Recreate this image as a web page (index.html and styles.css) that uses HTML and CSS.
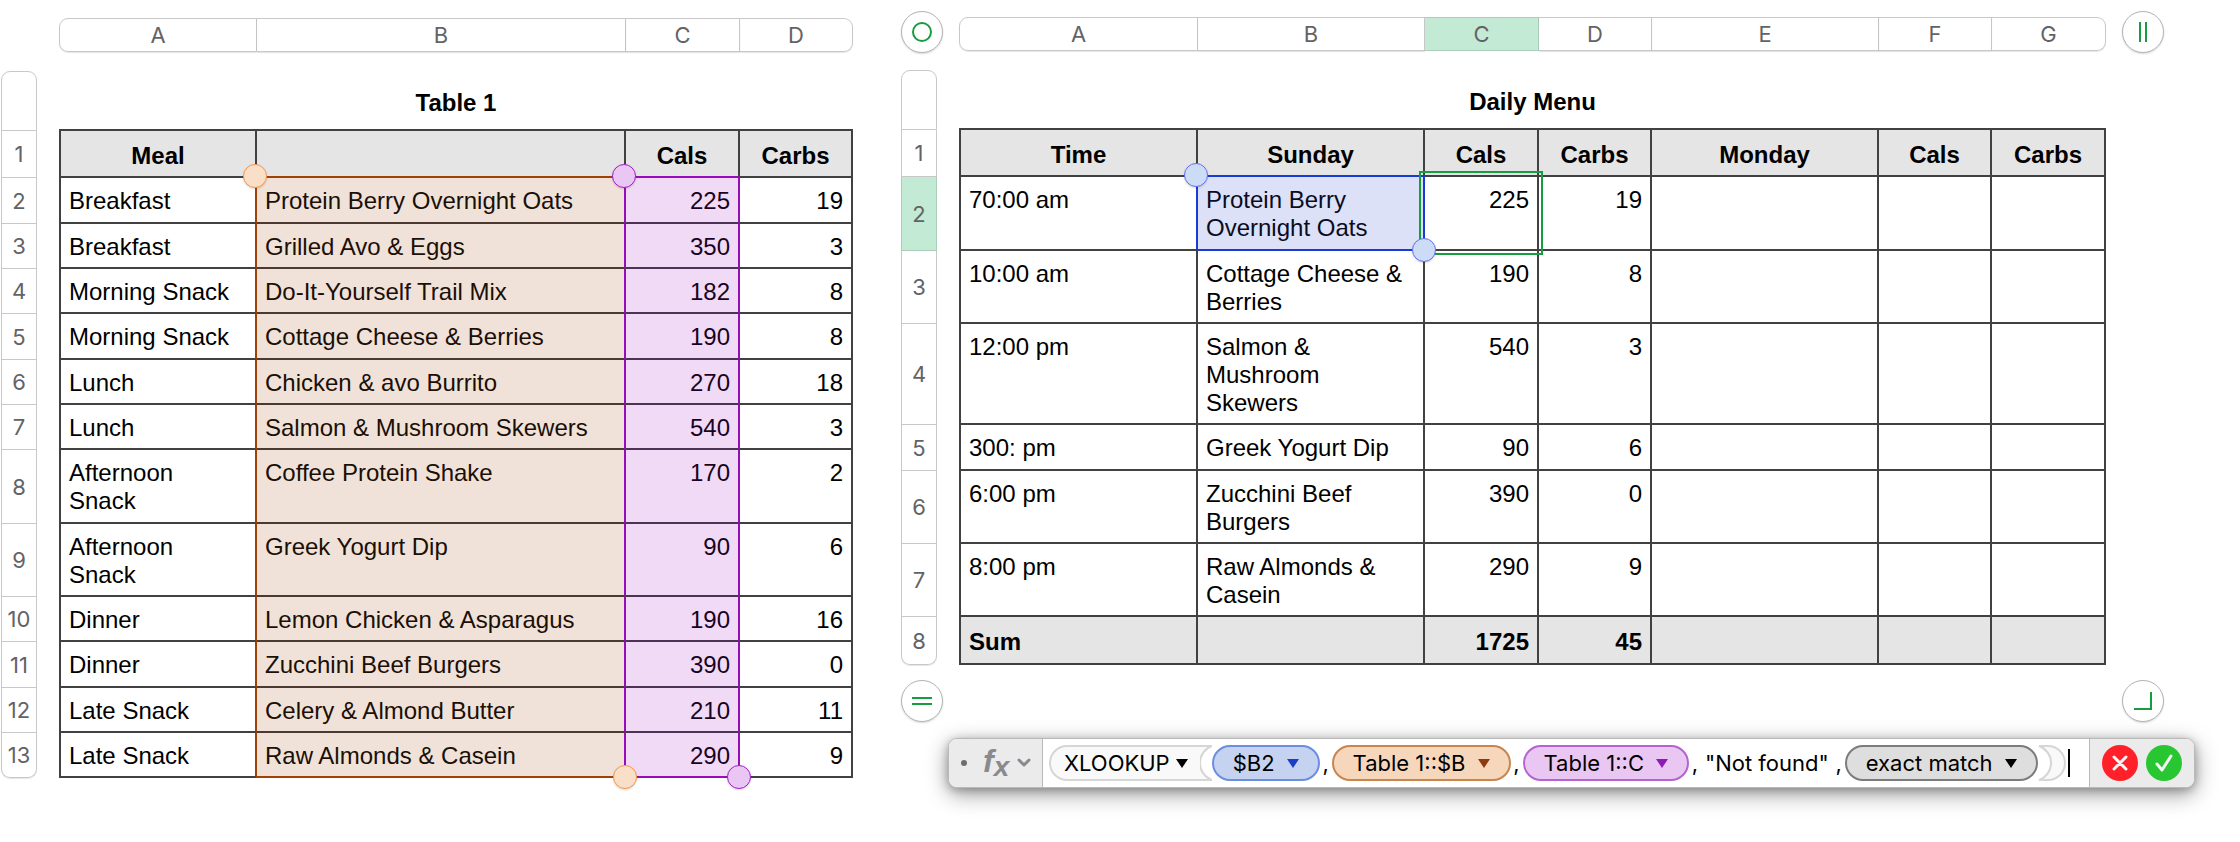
FILE: index.html
```
<!DOCTYPE html>
<html lang="en">

<head>
    <meta charset="UTF-8">
    <meta name="viewport" content="width=device-width, initial-scale=1.0">
    <title>Daily Menu</title>
    <link rel="stylesheet" href="styles.css">
</head>

<body>
    <main class="canvas">
        <section class="source-pane">
            <table class="sheet source">
                <colgroup>
                    <col class="w-rail"><col class="w-gap"><col class="w-meal"><col><col class="w-num"><col class="w-num-last">
                </colgroup>
                <thead>
                    <tr class="letters"><td colspan="2"></td><th>A</th><th>B</th><th>C</th><th>D</th></tr>
                    <tr class="spacer"><td colspan="6"></td></tr>
                    <tr class="title"><th class="rail"></th><td></td><th colspan="4">Table 1</th></tr>
                    <tr class="heading"><th class="rail">1</th><td class="gap"></td><th>Meal</th><th></th><th>Cals</th><th>Carbs</th></tr>
                </thead>
                <tbody>
                    <tr><th class="rail">2</th><td class="gap"></td><td>Breakfast</td><td>Protein Berry Overnight Oats<span class="grip start orange"></span></td><td class="num">225<span class="grip start purple"></span></td><td class="num">19</td></tr>
                    <tr><th class="rail">3</th><td class="gap"></td><td>Breakfast</td><td>Grilled Avo &amp; Eggs</td><td class="num">350</td><td class="num">3</td></tr>
                    <tr><th class="rail">4</th><td class="gap"></td><td>Morning Snack</td><td>Do-It-Yourself Trail Mix</td><td class="num">182</td><td class="num">8</td></tr>
                    <tr><th class="rail">5</th><td class="gap"></td><td>Morning Snack</td><td>Cottage Cheese &amp; Berries</td><td class="num">190</td><td class="num">8</td></tr>
                    <tr><th class="rail">6</th><td class="gap"></td><td>Lunch</td><td>Chicken &amp; avo Burrito</td><td class="num">270</td><td class="num">18</td></tr>
                    <tr><th class="rail">7</th><td class="gap"></td><td>Lunch</td><td>Salmon &amp; Mushroom Skewers</td><td class="num">540</td><td class="num">3</td></tr>
                    <tr><th class="rail">8</th><td class="gap"></td><td>Afternoon<br>Snack</td><td>Coffee Protein Shake</td><td class="num">170</td><td class="num">2</td></tr>
                    <tr><th class="rail">9</th><td class="gap"></td><td>Afternoon<br>Snack</td><td>Greek Yogurt Dip</td><td class="num">90</td><td class="num">6</td></tr>
                    <tr><th class="rail">10</th><td class="gap"></td><td>Dinner</td><td>Lemon Chicken &amp; Asparagus</td><td class="num">190</td><td class="num">16</td></tr>
                    <tr><th class="rail">11</th><td class="gap"></td><td>Dinner</td><td>Zucchini Beef Burgers</td><td class="num">390</td><td class="num">0</td></tr>
                    <tr><th class="rail">12</th><td class="gap"></td><td>Late Snack</td><td>Celery &amp; Almond Butter</td><td class="num">210</td><td class="num">11</td></tr>
                    <tr><th class="rail last">13</th><td class="gap"></td><td>Late Snack</td><td>Raw Almonds &amp; Casein<span class="grip end orange"></span></td><td class="num">290<span class="grip end purple"></span></td><td class="num">9</td></tr>
                </tbody>
            </table>
        </section>

        <section class="menu-pane">
            <div class="menu-row">
                <div class="menu-main">
                    <table class="sheet menu">
                        <colgroup>
                            <col class="w-rail"><col class="w-gap"><col><col class="w-day"><col class="w-num"><col class="w-num-last"><col class="w-day"><col class="w-num-last"><col class="w-num">
                        </colgroup>
                        <thead>
                            <tr class="letters">
                                <td colspan="2">
                                    <button class="handle corner" aria-label="Select table">
                                        <svg width="20" height="20" viewBox="0 0 20 20"><circle cx="10" cy="10" r="9"/></svg>
                                    </button>
                                </td>
                                <th>A</th><th>B</th><th class="current">C</th><th>D</th><th>E</th><th>F</th><th>G</th>
                            </tr>
                            <tr class="spacer"><td colspan="9"></td></tr>
                            <tr class="title"><th class="rail"></th><td></td><th colspan="7">Daily Menu</th></tr>
                            <tr class="heading"><th class="rail">1</th><td class="gap"></td><th>Time</th><th>Sunday</th><th>Cals</th><th>Carbs</th><th>Monday</th><th>Cals</th><th>Carbs</th></tr>
                        </thead>
                        <tbody>
                            <tr><th class="rail current">2</th><td class="gap"></td><td class="before-ref">70:00 am</td><td class="ref">Protein Berry Overnight Oats<span class="grip start blue"></span><span class="grip end blue"></span></td><td class="num active">225</td><td class="num">19</td><td></td><td></td><td></td></tr>
                            <tr><th class="rail">3</th><td class="gap"></td><td>10:00 am</td><td>Cottage Cheese &amp; Berries</td><td class="num">190</td><td class="num">8</td><td></td><td></td><td></td></tr>
                            <tr><th class="rail">4</th><td class="gap"></td><td>12:00 pm</td><td>Salmon &amp; Mushroom Skewers</td><td class="num">540</td><td class="num">3</td><td></td><td></td><td></td></tr>
                            <tr><th class="rail">5</th><td class="gap"></td><td>300: pm</td><td>Greek Yogurt Dip</td><td class="num">90</td><td class="num">6</td><td></td><td></td><td></td></tr>
                            <tr><th class="rail">6</th><td class="gap"></td><td>6:00 pm</td><td>Zucchini Beef Burgers</td><td class="num">390</td><td class="num">0</td><td></td><td></td><td></td></tr>
                            <tr><th class="rail">7</th><td class="gap"></td><td>8:00 pm</td><td>Raw Almonds &amp; Casein</td><td class="num">290</td><td class="num">9</td><td></td><td></td><td></td></tr>
                        </tbody>
                        <tfoot>
                            <tr><th class="rail last">8</th><td class="gap"></td><td>Sum</td><td></td><td class="num">1725</td><td class="num">45</td><td></td><td></td><td></td></tr>
                        </tfoot>
                    </table>
                    <button class="handle add-row" aria-label="Add rows">
                        <svg width="20" height="20" viewBox="0 0 20 20"><path d="M0 7H20M0 13H20"/></svg>
                    </button>
                </div>
                <div class="side-handles">
                    <button class="handle" aria-label="Add columns">
                        <svg width="20" height="20" viewBox="0 0 20 20"><path d="M7 0V20M13 0V20"/></svg>
                    </button>
                    <button class="handle" aria-label="Resize table">
                        <svg width="20" height="20" viewBox="0 0 20 20"><path d="M1 18H18V1"/></svg>
                    </button>
                </div>
            </div>

            <div class="formula-bar">
                <button class="fx" aria-label="Formula options">
                    <span class="dot"></span>
                    <span class="fx-label">f<sub>x</sub></span>
                    <svg width="14" height="10" viewBox="0 0 14 10"><path d="M2 2L7 7L12 2"/></svg>
                </button>
                <div class="formula">
                    <button class="token func">XLOOKUP<svg class="arrow" width="12" height="9" viewBox="0 0 12 9"><path d="M0 0H12L6 9Z"/></svg></button>
                    <svg class="paren-open" width="12" height="36" viewBox="0 0 12 36">
                        <path class="paren-fill" d="M0 1H12A18 18 0 0 0 12 35H0Z"/>
                        <path class="paren-line" d="M0 1H12A18 18 0 0 0 12 35H0"/>
                    </svg>
                    <button class="token blue">$B2<svg class="arrow" width="12" height="9" viewBox="0 0 12 9"><path d="M0 0H12L6 9Z"/></svg></button>
                    <span class="comma">,</span>
                    <button class="token orange">Table 1::$B<svg class="arrow" width="12" height="9" viewBox="0 0 12 9"><path d="M0 0H12L6 9Z"/></svg></button>
                    <span class="comma">,</span>
                    <button class="token purple">Table 1::C<svg class="arrow" width="12" height="9" viewBox="0 0 12 9"><path d="M0 0H12L6 9Z"/></svg></button>
                    <span class="comma">,</span>
                    <span class="literal">"Not found"</span>
                    <span class="comma">,</span>
                    <button class="token plain">exact match<svg class="arrow" width="12" height="9" viewBox="0 0 12 9"><path d="M0 0H12L6 9Z"/></svg></button>
                    <svg class="paren-close" width="28" height="36" viewBox="0 0 28 36">
                        <path class="paren-both" d="M1 1H10A17 17 0 0 1 10 35H1A18 18 0 0 0 1 1Z"/>
                    </svg>
                    <span class="caret"></span>
                </div>
                <div class="confirm">
                    <button class="cancel" aria-label="Cancel">
                        <svg width="16" height="16" viewBox="0 0 16 16"><path d="M2 2L14 14M14 2L2 14"/></svg>
                    </button>
                    <button class="accept" aria-label="Accept">
                        <svg width="18" height="18" viewBox="0 0 18 18"><path d="M2 10L7 16L16 2"/></svg>
                    </button>
                </div>
            </div>
        </section>
    </main>
</body>

</html>
```
FILE: styles.css
```
* {
    box-sizing: border-box;
}

body {
    margin: 0;
    background: #ffffff;
    color: #000000;
    font-family: "Liberation Sans", Arial, sans-serif;
    font-size: 24px;
    line-height: 28px;
}

button {
    margin: 0;
    padding: 0;
    border: none;
    background: none;
    color: inherit;
    font: inherit;
    cursor: pointer;
}

svg {
    display: block;
    fill: none;
}

.canvas {
    display: grid;
    grid-template-columns: minmax(0, 852fr) minmax(0, 1263fr);
    gap: 48px;
    padding: 0 76px 48px 1px;
}

.source-pane {
    padding-top: 18px;
}

.menu-pane {
    padding-top: 17px;
}

/* Tables */

.sheet {
    width: 100%;
    table-layout: fixed;
    border-collapse: separate;
    border-spacing: 0;
}

.w-rail {
    width: 36px;
}

.w-gap {
    width: 22px;
}

.w-meal {
    width: 198px;
}

.w-num {
    width: 114px;
}

.w-num-last {
    width: 113px;
}

.w-day {
    width: 227px;
}

.sheet td,
.sheet th {
    padding: 0;
    vertical-align: top;
}

.letters th {
    height: 34px;
    border: 1px solid #c8c8c8;
    border-left: none;
    box-shadow: 0 1px 1px rgba(0, 0, 0, 0.1);
}

.letters th:nth-child(2) {
    border-left: 1px solid #c8c8c8;
    border-radius: 9px 0 0 9px;
}

.letters th:last-child {
    border-radius: 0 9px 9px 0;
}

.sheet .letters th,
.sheet .rail {
    color: #636366;
    font-family: Inter, sans-serif;
    font-size: 22px;
    font-weight: 400;
    text-align: center;
    vertical-align: middle;
}

.spacer td {
    height: 19px;
}

.sheet .rail {
    border: 1px solid #c8c8c8;
    border-top: none;
}

.sheet .rail.last {
    border-radius: 0 0 9px 9px;
    box-shadow: 0 1px 1px rgba(0, 0, 0, 0.1);
}

.sheet .title .rail {
    border-top: 1px solid #c8c8c8;
    border-radius: 9px 9px 0 0;
}

.letters .current,
.sheet .rail.current {
    background: #c3ead5;
    border-color: #abcdb9;
    box-shadow: none;
}

.sheet .title th:last-child {
    padding: 18px 0 12px;
    border-bottom: 2px solid #414141;
    font-weight: 700;
}

.heading th,
tbody td,
tfoot td {
    border-right: 2px solid #414141;
    border-bottom: 2px solid #414141;
}

.sheet .gap {
    border: none;
}

.gap + th,
.gap + td {
    border-left: 2px solid #414141;
}

.sheet .heading th:not(.rail) {
    padding: 11px 8px 6px;
    background: #e5e5e5;
    font-weight: 700;
    text-align: center;
}

.sheet tbody td:not(.gap) {
    padding: 9px 8px 6px;
}

.sheet tbody tr:nth-child(3n+1) td:not(.gap) {
    padding-bottom: 7px;
}

.sheet tfoot td:not(.gap) {
    padding: 11px 8px 7px;
    background: #e5e5e5;
    font-weight: 700;
}

.sheet .num {
    text-align: right;
}

/* Referenced ranges */

.source .heading th:nth-child(4) {
    border-bottom-color: #a04206;
}

.source .heading th:nth-child(5) {
    border-bottom-color: #970cbd;
}

.source tbody td:nth-child(3) {
    border-right-color: #a04206;
}

.source tbody td:nth-child(4) {
    position: relative;
    background: #f0e2d9;
    border-right-color: #970cbd;
    border-bottom-color: #4c3a32;
    color: #1b0f06;
}

.source tbody td:nth-child(5) {
    position: relative;
    background: #f0daf6;
    border-right-color: #970cbd;
    border-bottom-color: #4c3355;
    color: #1a0322;
}

.source tbody tr:last-child td:nth-child(4) {
    border-bottom-color: #a04206;
}

.source tbody tr:last-child td:nth-child(5) {
    border-bottom-color: #970cbd;
}

.menu .before-ref {
    border-right-color: #1a3bd1;
}

.menu .ref {
    position: relative;
    background: #dde1f8;
    border-color: #1a3bd1;
    box-shadow: 0 -2px 0 #1a3bd1;
    color: #0a0d22;
}

.menu .active {
    position: relative;
    z-index: 1;
}

/* Outline of the cell being edited */
.active::after {
    content: "";
    position: absolute;
    inset: -6px;
    border: 2px solid #169c41;
}

.grip {
    position: absolute;
    z-index: 2;
    width: 24px;
    height: 24px;
    border: 1px solid;
    border-radius: 50%;
    box-shadow: 0 1px 2px rgba(0, 0, 0, 0.15);
}

.grip.start {
    top: -14px;
    left: -14px;
}

.grip.end {
    right: -13px;
    bottom: -13px;
}

.grip.orange {
    background: #f9dfc7;
    border-color: #fb9648;
}

.grip.purple {
    background: #e9c6f4;
    border-color: #a41fc8;
}

.grip.blue {
    background: #cddcf6;
    border-color: #6470f2;
}

/* Round table handles */

.menu-row {
    display: flex;
    gap: 16px;
}

.menu-main {
    flex: 1;
    min-width: 0;
}

.side-handles {
    display: flex;
    flex-direction: column;
    justify-content: space-between;
    margin-top: -6px;
}

.handle {
    display: flex;
    align-items: center;
    justify-content: center;
    width: 42px;
    height: 42px;
    border: 1px solid #b4b4b4;
    border-radius: 50%;
    background: #ffffff;
    box-shadow: 0 1px 2px rgba(0, 0, 0, 0.15);
}

.handle svg {
    stroke: #169c41;
    stroke-width: 2;
}

.handle.corner {
    margin: -6px 0 -2px;
}

.handle.add-row {
    margin-top: 15px;
}

/* Formula bar */

.formula-bar {
    display: flex;
    height: 50px;
    margin: 16px -31px 0 47px;
    border: 1px solid #b9b9b9;
    border-radius: 9px;
    background: #ffffff;
    box-shadow: 0 6px 22px rgba(0, 0, 0, 0.4), 0 2px 8px rgba(0, 0, 0, 0.25);
    font-family: Inter, sans-serif;
    font-size: 22px;
}

.fx {
    display: flex;
    align-items: center;
    width: 94px;
    padding-left: 12px;
    border-right: 1px solid #b9b9b9;
    border-radius: 8px 0 0 8px;
    background: #ebebeb;
}

.dot {
    width: 6px;
    height: 6px;
    border-radius: 50%;
    background: #6e6e70;
}

.fx-label {
    width: 28px;
    margin: 0 6px 0 16px;
    padding-bottom: 4px;
    color: #8a8a8e;
    font-family: "Liberation Sans", Arial, sans-serif;
    font-size: 32px;
    font-style: italic;
    font-weight: 700;
    text-align: left;
    white-space: nowrap;
}

.fx-label sub {
    font-size: 28px;
    line-height: 0;
    vertical-align: -4px;
}

.fx svg {
    stroke: #8a8a8e;
    stroke-width: 3;
    stroke-linecap: round;
    stroke-linejoin: round;
}

.formula {
    display: flex;
    flex: 1;
    align-items: center;
    padding-left: 6px;
    white-space: nowrap;
}

.token {
    display: flex;
    align-items: center;
    gap: 12px;
    height: 36px;
    padding: 0 19px;
    border: 2px solid;
    border-radius: 18px;
}

.arrow {
    fill: currentColor;
}

.token.func {
    gap: 6px;
    padding: 0 12px 0 13px;
    border-color: #d6d6d6;
    border-right: none;
    border-radius: 18px 0 0 18px;
    background: #f9f9f9;
}

.token.blue {
    background: #c6d3f0;
    border-color: #6b8ee2;
}

.token.blue .arrow {
    color: #1c3dc6;
}

.token.orange {
    background: #f6d7bc;
    border-color: #c8864e;
}

.token.orange .arrow {
    color: #8d3a10;
}

.token.purple {
    background: #eac6f3;
    border-color: #b563d0;
}

.token.purple .arrow {
    color: #8e1ab8;
}

.token.plain {
    background: #dedede;
    border-color: #7c7c7c;
}

.paren-fill {
    fill: #f9f9f9;
}

.paren-line {
    stroke: #d6d6d6;
    stroke-width: 2;
}

.paren-both {
    fill: #f9f9f9;
    stroke: #d6d6d6;
    stroke-width: 2;
}

.comma {
    width: 12px;
    text-align: center;
}

.literal {
    padding: 0 4px;
}

.caret {
    width: 2px;
    height: 28px;
    margin-left: 2px;
    background: #000000;
}

.confirm {
    display: flex;
    align-items: center;
    gap: 8px;
    padding: 0 12px;
    border-left: 1px solid #b9b9b9;
    border-radius: 0 8px 8px 0;
    background: #ebebeb;
}

.confirm button {
    display: flex;
    align-items: center;
    justify-content: center;
    width: 36px;
    height: 36px;
    border-radius: 50%;
}

.cancel {
    background: #ff2029;
}

.accept {
    background: #28c732;
}

.confirm svg {
    stroke: #f4f4f4;
    stroke-width: 3;
    stroke-linecap: round;
    stroke-linejoin: round;
}
```
